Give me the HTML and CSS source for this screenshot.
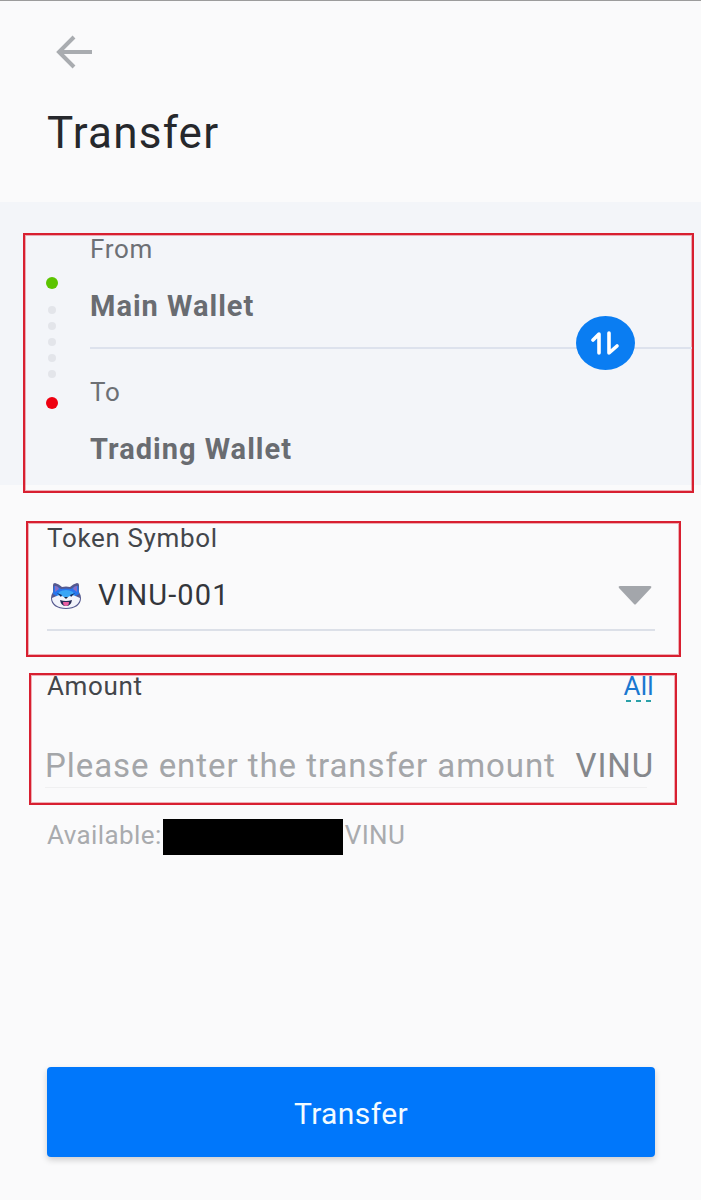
FILE: index.html
```html
<!DOCTYPE html>
<html lang="en">
<head>
    <meta charset="UTF-8">
    <meta name="viewport" content="width=device-width, initial-scale=1.0">
    <title>Transfer</title>
    <link rel="stylesheet" href="styles.css">
</head>
<body>
    <header class="header">
        <svg class="back" width="40" height="36" viewBox="0 0 40 36" fill="none" stroke="#a9acb0" stroke-width="4">
            <path d="M38 18H4"/>
            <path d="M20 3L5 18l15 15"/>
        </svg>
        <h1 class="title">Transfer</h1>
    </header>

    <section class="panel">
        <div class="wallet-box">
            <div class="dots">
                <span class="dot green"></span>
                <span class="dot grey first"></span>
                <span class="dot grey"></span>
                <span class="dot grey"></span>
                <span class="dot grey"></span>
                <span class="dot grey"></span>
                <span class="dot red"></span>
            </div>
            <div class="wallets">
                <div class="wallet-label">From</div>
                <div class="wallet-name">Main Wallet</div>
                <div class="wallet-line"></div>
                <div class="wallet-label to">To</div>
                <div class="wallet-name">Trading Wallet</div>
            </div>
            <div class="swap">
                <svg width="30" height="30" viewBox="0 0 30 30" fill="none" stroke="#fff" stroke-width="3.6" stroke-linecap="round" stroke-linejoin="round">
                    <path d="M8 25V6L2 12"/>
                    <path d="M18 5v20l8-7"/>
                </svg>
            </div>
        </div>
    </section>

    <section class="token-box">
        <div class="field-label">Token Symbol</div>
        <div class="token-row">
            <svg class="fox" width="32" height="30" viewBox="0 0 32 30">
                <!-- head outline and ears -->
                <path d="M3 5q0-2 2-2 4 1 7 4 4-1 8 0 3-3 7-4 2 0 2 2l0 7q2 3 2 6c0 7-6 11-15 11S1 25 1 18q0-3 2-6z" fill="#55598f"/>
                <path d="M4 6q4 0 7 3 5-1 10 0 3-3 7-3l1 8-9 5h-8l-9-5z" fill="#2776ee"/>
                <path d="M5 6q3 0 4 3l-4 3zM27 6q-3 0-4 3l4 3z" fill="#8a6fc4"/>
                <path d="M9 12q7-4 14 0l2 4-6 3h-6l-6-3z" fill="#3aa6f5"/>
                <!-- muzzle -->
                <path d="M2 18q4-2 8-3l6 3 6-3q4 1 8 3c0 6-6 10-14 10S2 24 2 18z" fill="#f2f4fb"/>
                <path d="M7 13l5 2-1 2zM25 13l-5 2 1 2z" fill="#10265c"/>
                <path d="M14 17h4l-2 2z" fill="#1c2540"/>
                <path d="M10 20q6 2 12 0-1 6-6 6t-6-6z" fill="#272a55"/>
                <path d="M13 22h6q0 4-3 4t-3-4z" fill="#ea5fa2"/>
            </svg>
            <span class="token-name">VINU-001</span>
            <svg class="caret" width="34" height="20" viewBox="0 0 34 20">
                <path d="M2 1h30q2 0 1 2L18 19q-1 1-2 0L1 3q-1-2 1-2z" fill="#a3a6ab"/>
            </svg>
        </div>
    </section>

    <section class="amount-box">
        <div class="amount-head">
            <span class="field-label">Amount</span>
            <span class="all">All</span>
        </div>
        <div class="amount-row">
            <span class="placeholder">Please enter the transfer amount</span>
            <span class="unit">VINU</span>
        </div>
    </section>

    <div class="available">
        <span>Available:</span>
        <span class="redacted"></span>
        <span>VINU</span>
    </div>

    <button class="submit">Transfer</button>
</body>
</html>
```

FILE: styles.css
```css
body {
    margin: 0;
    height: 1200px;
    overflow: hidden;
    background-color: #fafafb;
    font-family: 'Roboto', sans-serif;
    border-top: 1px solid #9c9c9c;
    box-sizing: border-box;
}

.header {
    height: 201px;
    padding: 33px 0 0 54px;
    box-sizing: border-box;
}

.back {
    display: block;
}

.title {
    margin: 38px 0 0 -7px;
    font-size: 44px;
    line-height: 50px;
    font-weight: 400;
    letter-spacing: 1.2px;
    color: #26282c;
}

.panel {
    height: 283px;
    padding-top: 31px;
    box-sizing: border-box;
    background-color: #f3f5f9;
}

.wallet-box {
    position: relative;
    display: flex;
    height: 260px;
    margin: 0 7px 0 23px;
    border: 2px solid #d81f30;
    box-shadow: inset 0 0 0 1px rgba(216, 31, 48, 0.35);
    box-sizing: border-box;
}

.dots {
    display: flex;
    flex-direction: column;
    align-items: center;
    width: 12px;
    margin-left: 21px;
    padding-top: 42px;
}

.dot {
    border-radius: 50%;
}

.dot.green,
.dot.red {
    width: 12px;
    height: 12px;
}

.dot.green {
    background-color: #5cc400;
}

.dot.red {
    margin-top: 19px;
    background-color: #ee0010;
}

.dot.grey {
    width: 8px;
    height: 8px;
    margin-top: 8px;
    background-color: #e3e5ea;
}

.dot.first {
    margin-top: 17px;
}

.wallets {
    flex: 1;
    margin-left: 32px;
}

.wallet-label {
    margin-top: -1px;
    font-size: 26px;
    line-height: 30px;
    letter-spacing: 0.7px;
    color: #6d7075;
}

.wallet-label.to {
    margin-top: 28px;
}

.wallet-name {
    margin-top: 26px;
    font-size: 29px;
    line-height: 32px;
    font-weight: 700;
    letter-spacing: 1px;
    color: #696c71;
}

.wallet-line {
    height: 2px;
    margin-top: 25px;
    background-color: #dde2ed;
}

.swap {
    position: absolute;
    left: 551px;
    top: 81px;
    display: flex;
    align-items: center;
    justify-content: center;
    width: 59px;
    height: 54px;
    border-radius: 50%;
    background-color: #0a7df2;
}

.token-box {
    height: 136px;
    margin: 36px 20px 0 26px;
    padding: 0 24px 0 19px;
    border: 2px solid #d81f30;
    box-shadow: inset 0 0 0 1px rgba(216, 31, 48, 0.35);
    box-sizing: border-box;
}

.field-label {
    font-size: 26px;
    line-height: 30px;
    letter-spacing: 0.65px;
    color: #43464b;
}

.token-row {
    display: flex;
    align-items: center;
    height: 40px;
    margin-top: 22px;
    padding-bottom: 14px;
    border-bottom: 2px solid #dce0e8;
}

.fox {
    margin-left: 3px;
}

.token-name {
    flex: 1;
    margin-left: 16px;
    font-size: 29px;
    letter-spacing: 1.1px;
    color: #33363b;
}

.caret {
    margin-right: 3px;
}

.amount-box {
    height: 132px;
    margin: 16px 24px 0 29px;
    padding: 0 21px 0 14px;
    border: 2px solid #d81f30;
    box-shadow: inset 0 0 0 1px rgba(216, 31, 48, 0.35);
    box-sizing: border-box;
}

.amount-head {
    display: flex;
    justify-content: space-between;
    align-items: flex-start;
    height: 22px;
    padding-left: 2px;
}

.amount-head .field-label {
    line-height: 22px;
}

.all {
    font-size: 26px;
    line-height: 22px;
    letter-spacing: 0.3px;
    color: #1a78d0;
}

.all::after {
    content: "";
    display: block;
    width: 25px;
    height: 2px;
    margin: 3px 0 0 3px;
    background-image: repeating-linear-gradient(90deg, #2aa0a8 0, #2aa0a8 5px, transparent 5px, transparent 10px);
}

.amount-row {
    display: flex;
    justify-content: space-between;
    align-items: center;
    height: 44px;
    margin: 46px 7px 0 0;
    box-shadow: 0 1px 0 #f0f0f1;
}

.placeholder {
    font-size: 33px;
    letter-spacing: 0.95px;
    color: #a4a6a9;
}

.unit {
    margin-right: -7px;
    font-size: 33px;
    letter-spacing: 0.9px;
    color: #85888c;
}

.available {
    display: flex;
    align-items: center;
    height: 36px;
    margin: 14px 0 0 47px;
    padding-bottom: 4px;
    box-sizing: border-box;
    font-size: 26px;
    letter-spacing: 0.4px;
    color: #a9abae;
}

.redacted {
    flex: none;
    align-self: flex-start;
    width: 180px;
    height: 36px;
    margin: 0 2px 0 1px;
    background-color: #000;
}

.submit {
    display: block;
    width: 608px;
    height: 90px;
    margin: 212px 0 0 47px;
    padding-top: 3px;
    border: none;
    border-radius: 4px;
    background-color: #0077fb;
    box-shadow: 0 3px 6px rgba(0, 0, 0, 0.18);
    font-family: inherit;
    font-size: 30px;
    letter-spacing: 0.4px;
    color: #f2fbff;
}
```
